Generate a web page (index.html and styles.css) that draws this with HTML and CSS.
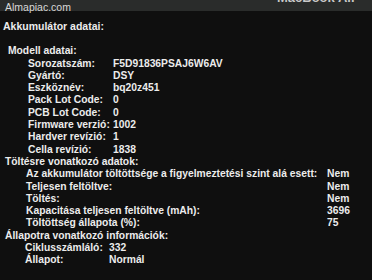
FILE: index.html
```html
<!DOCTYPE html>
<html lang="hu">

<head>
    <meta charset="UTF-8">
    <meta name="viewport" content="width=device-width, initial-scale=1.0">
    <title>Akkumulátor adatai</title>
    <link rel="stylesheet" href="styles.css">
</head>

<body>
    <div class="titlebar">
        <span class="wm">Almapiac.com</span>
        <span class="title">MacBook Air</span>
    </div>

    <div class="content">
        <h1>Akkumulátor adatai:</h1>

        <div class="head">Modell adatai:</div>
        <div class="rows r1">
            <span>Sorozatszám:</span><span>F5D91836PSAJ6W6AV</span>
            <span>Gyártó:</span><span>DSY</span>
            <span>Eszköznév:</span><span>bq20z451</span>
            <span>Pack Lot Code:</span><span>0</span>
            <span>PCB Lot Code:</span><span>0</span>
            <span>Firmware verzió:</span><span>1002</span>
            <span>Hardver revízió:</span><span>1</span>
            <span>Cella revízió:</span><span>1838</span>
        </div>

        <div class="head h2">Töltésre vonatkozó adatok:</div>
        <div class="rows r2">
            <span>Az akkumulátor töltöttsége a figyelmeztetési szint alá esett:</span><span>Nem</span>
            <span>Teljesen feltöltve:</span><span>Nem</span>
            <span>Töltés:</span><span>Nem</span>
            <span>Kapacitása teljesen feltöltve (mAh):</span><span>3696</span>
            <span>Töltöttség állapota (%):</span><span>75</span>
        </div>

        <div class="head h3">Állapotra vonatkozó információk:</div>
        <div class="rows r3">
            <span>Ciklusszámláló:</span><span>332</span>
            <span>Állapot:</span><span>Normál</span>
        </div>
    </div>
</body>

</html>
```

FILE: styles.css
```css
* {
    margin: 0;
    padding: 0;
    box-sizing: border-box;
}

body {
    width: 372px;
    height: 280px;
    overflow: hidden;
    background-color: #0f0f0f;
    font-family: "Liberation Sans", Arial, sans-serif;
    font-weight: bold;
    font-size: 10.3px;
    color: #ececec;
}

.titlebar {
    height: 11px;
    background-color: #2a2c2b;
    position: relative;
}

.wm {
    position: absolute;
    left: 5px;
    top: 1px;
    font-weight: normal;
    font-size: 10.5px;
    line-height: 12px;
    color: #d8d8d8;
}

.title {
    position: absolute;
    left: 277px;
    top: -9px;
    font-size: 13px;
    line-height: 14px;
    color: #c8c8c8;
}

.content {
    padding: 9px 0 0 3px;
    line-height: 12.3px;
    white-space: nowrap;
}

h1 {
    font-size: 10.5px;
    margin-bottom: 13px;
}

.head {
    padding-left: 5px;
}

.h2,
.h3 {
    padding-left: 2px;
}

.rows {
    display: grid;
    grid-template-columns: 85px auto;
    padding-left: 25px;
}

.r2 {
    grid-template-columns: 301px auto;
    padding-left: 23px;
}

.r3 {
    grid-template-columns: 84px auto;
    padding-left: 22px;
}
```
